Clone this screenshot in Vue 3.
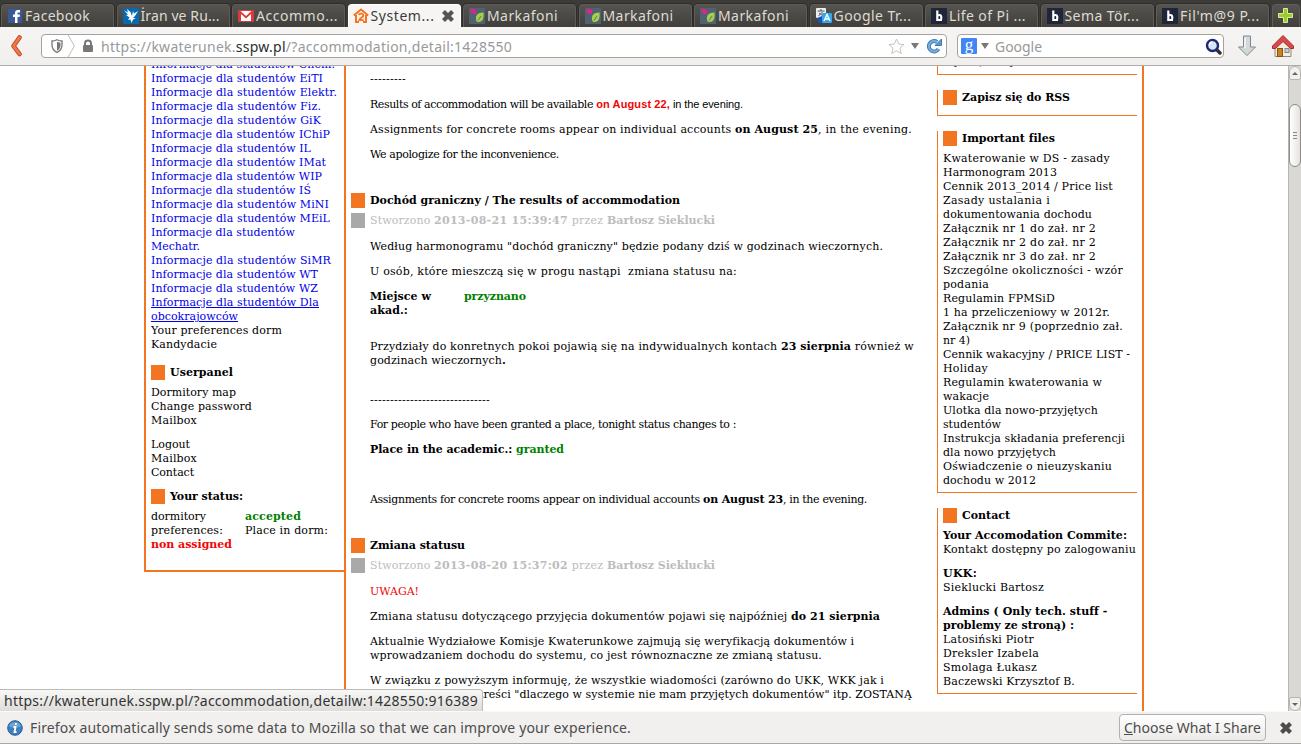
<script setup>
const vFit = {
  mounted(el, binding) {
    const natural = el.getBoundingClientRect().width
    const count = Array.from(el.textContent).length
    el.style.letterSpacing = (binding.value - natural) / count + 'px'
  }
}

const tabs = [
  { icon: 'facebook', label: 'Facebook', w: 65 },
  { icon: 'bird', label: 'İran ve Ru...', w: 79 },
  { icon: 'gmail', label: 'Accommo...', w: 82 },
  { icon: 'house', label: 'System...', w: 64, active: true },
  { icon: 'leaf', label: 'Markafoni', w: 71 },
  { icon: 'leaf', label: 'Markafoni', w: 71 },
  { icon: 'leaf', label: 'Markafoni', w: 71 },
  { icon: 'translate', label: 'Google Tr...', w: 78 },
  { icon: 'b', label: 'Life of Pi ...', w: 77 },
  { icon: 'b', label: 'Sema Tör...', w: 75 },
  { icon: 'b', label: "Fil'm@9 P...", w: 80 }
]

const links = [
  ['Chem.', 184], ['EiTI', 172], ['Elektr.', 186], ['Fiz.', 170], ['GiK', 170], ['IChiP', 179], ['IL', 160],
  ['IMat', 175], ['WIP', 171], ['IŚ', 160], ['MiNI', 178], ['MEiL', 179]
]
const linksEnd = [['SiMR', 180], ['WT', 167], ['WZ', 167]]

const files = [
  ['Kwaterowanie w DS - zasady', 167], ['Harmonogram 2013', 114], ['Cennik 2013_2014 / Price list', 170],
  ['Zasady ustalania i', 107], ['dokumentowania dochodu', 149], ['Załącznik nr 1 do zał. nr 2', 153],
  ['Załącznik nr 2 do zał. nr 2', 153], ['Załącznik nr 3 do zał. nr 2', 153],
  ['Szczególne okoliczności - wzór', 180], ['podania', 46], ['Regulamin FPMSiD', 112],
  ['1 ha przeliczeniowy w 2012r.', 167], ['Załącznik nr 9 (poprzednio zał.', 180], ['nr 4)', 27],
  ['Cennik wakacyjny / PRICE LIST -', 187], ['Holiday', 45], ['Regulamin kwaterowania w', 159],
  ['wakacje', 46], ['Ulotka dla nowo-przyjętych', 155], ['studentów', 58],
  ['Instrukcja składania preferencji', 182], ['dla nowo przyjętych', 113],
  ['Oświadczenie o nieuzyskaniu', 169], ['dochodu w 2012', 93]
]
</script>

<template>
  <div class="browser">
    <div class="tabs">
      <div v-for="(t, i) in tabs" :key="i" class="tab" :class="{ active: t.active }">
        <svg v-if="t.icon === 'facebook'" class="fav" viewBox="0 0 16 16"><rect x="1" y="1" width="14" height="14" fill="#3b5998" /><path d="M8 15V9H6V6.500h2V5c0-2 1-3 3-3h2v2.500h-1.500c-.7 0-1 .3-1 1v1H13L12.600 9h-2.100v6z" fill="#fff" /></svg>
        <svg v-else-if="t.icon === 'bird'" class="fav" viewBox="0 0 16 16"><rect width="16" height="16" fill="#0868b0" /><path d="M1 2.500l4 2-1-3.500 3.500 3L9 8l1-5 1 2.500L15 3l-3 5-2 2 3 .5-3 1L8.500 15l-1-3.500L5 12l1.500-2.500L3 7l2-.5z" fill="#fff" /></svg>
        <svg v-else-if="t.icon === 'gmail'" class="fav" viewBox="0 0 16 16"><rect y="2" width="16" height="12" rx="1" fill="#d93a3a" /><path d="M2.500 3h11L8 8z" fill="#fff" /><path d="M3 13V6l5 4.500L13 6v7z" fill="#fff" /></svg>
        <svg v-else-if="t.icon === 'house'" class="fav" viewBox="0 0 16 16"><path d="M.8 7.500L8 1.500l7.200 6M3 7v7h3M13 7v7h-3" fill="none" stroke="#f47521" stroke-width="2" /><path d="M5.800 7c.5-2 4.700-2 4.500.5C10 9.500 6.500 10 6.300 12.200h4.500" fill="none" stroke="#f47521" stroke-width="1.800" /></svg>
        <svg v-else-if="t.icon === 'leaf'" class="fav" viewBox="0 0 16 16"><rect width="16" height="16" fill="#4e6270" /><path d="M1.500 1c4-1 7 2 5.500 5C3 6.500 1 5 1.500 1z" fill="#d8268c" /><path d="M14.500 4.500c-6 0-9 3-7 9 5 2 8-2 7-9z" fill="#a5cd4e" /><path d="M9 12.500l3-4.500" stroke="#4e6270" stroke-width=".8" /></svg>
        <svg v-else-if="t.icon === 'translate'" class="fav" viewBox="0 0 16 16"><rect width="10" height="10" rx="1" fill="#eee" /><path d="M1.500 3h7M5 1v2M2.500 8l4-4M3 5l4 3" stroke="#555" fill="none" /><path d="M1 10l5-2v7H3z" fill="#1556b8" /><rect x="6" y="5" width="10" height="10" rx="1" fill="#31a8ee" /><path d="M8 13l3-6.500L14 13M9 11h4" fill="none" stroke="#fff" stroke-width="1.400" /></svg>
        <svg v-else class="fav" viewBox="0 0 16 16"><rect width="16" height="16" fill="#20263a" /><path d="M6.300 2.500V13M6 7.800c4-2 5 0 4 4.200H6" fill="none" stroke="#fff" stroke-width="2.200" /></svg>
        <span class="label"><span v-fit="t.w">{{ t.label }}</span></span>
        <svg v-if="t.active" class="close" viewBox="0 0 14 14"><path d="M2.500 2.500l9 9M11.500 2.500l-9 9" stroke="#555" stroke-width="4.200" /></svg>
      </div>
      <div class="newtab">
        <svg viewBox="0 0 18 18"><path d="M6.500 1.500h4v5h5v4h-5v5h-4v-5h-5v-4h5z" fill="#9ccc2b" stroke="#d7ee9a" /></svg>
      </div>
    </div>

    <div class="toolbar">
      <svg class="back" viewBox="0 0 14 22"><path d="M9.500 2.500L3.500 11l6 8" fill="none" stroke="#b8431c" stroke-width="4.500" stroke-linejoin="round" stroke-linecap="round" /><path d="M9.500 2.500L3.500 11l6 8" fill="none" stroke="#ee7a47" stroke-width="2.800" stroke-linecap="round" /></svg>
      <div class="url">
        <svg class="shield" viewBox="0 0 14 14"><path d="M2 2c2 0 3.500-.5 5-1.300C8.500 1.500 10 2 12 2v4c0 3.500-2 6-5 7.500C4 12 2 9.500 2 6z" fill="none" stroke="#777" stroke-width="1.300" /><path d="M7 2.800c1 .5 2 .8 3.500.9v2.500c0 2.300-1.300 4.300-3.500 5.500z" fill="#777" /></svg>
        <svg class="chev" viewBox="0 0 9 23"><path d="M1 0l6.500 11.500L1 23" fill="none" stroke="#bbb" /></svg>
        <svg class="lock" viewBox="0 0 12 14"><path d="M3 6V4.500a3 3 0 016 0V6" fill="none" stroke="#777" stroke-width="2" /><rect x="1" y="6" width="10" height="7" rx="1" fill="#777" /></svg>
        <span class="address"><span v-fit="411">https://kwaterunek.<b>sspw.pl</b>/?accommodation,detail:1428550</span></span>
        <svg class="star" viewBox="0 0 17 17"><path d="M8.500 1l2.200 5 5.300.6-4 3.500 1.200 5.400-4.700-2.800-4.700 2.800L5 10.100 1 6.600 6.300 6z" fill="#fff" stroke="#c4c4c4" /></svg>
        <i class="caret"></i>
        <svg class="reload" viewBox="0 0 16 16"><path d="M12.500 11A5.200 5.200 0 1111 4" fill="none" stroke="#3f78b3" stroke-width="4" /><path d="M12.500 11A5.200 5.200 0 1111 4" fill="none" stroke="#78add9" stroke-width="2.200" /><path d="M9 7.500h6.500V1z" fill="#5e97cc" stroke="#3f78b3" /></svg>
      </div>
      <div class="search">
        <svg class="google" viewBox="0 0 16 16"><rect width="16" height="16" rx="1" fill="#4285f4" /><text x="8" y="11.500" text-anchor="middle" font-family="Liberation Serif, serif" font-size="17" fill="#fff">g</text></svg>
        <i class="caret"></i>
        <span class="address grow"><span v-fit="47">Google</span></span>
        <svg class="glass" viewBox="0 0 17 17"><path d="M11 11l4 4" stroke="#333" stroke-width="3.500" stroke-linecap="round" /><circle cx="7.500" cy="7.500" r="5.500" fill="#d7e6f7" stroke="#1d2a72" stroke-width="2.400" /><path d="M4.500 7a3 3 0 013-3" fill="none" stroke="#fff" stroke-width="1.500" /></svg>
      </div>
      <svg class="down" viewBox="0 0 20 22"><path d="M6.500 1h7v11h5L10 20.500 1.500 12h5z" fill="#d3d8da" stroke="#80868a" stroke-linejoin="round" /><path d="M8 2.500v10.500" stroke="#f5f7f8" stroke-width="1.500" /></svg>
      <svg class="home" viewBox="0 0 24 24"><path d="M4 12l8-8 8 8v10.500H4z" fill="#f4eedf" stroke="#8f887a" /><path d="M12 1.500L1.500 12v2.500h3L12 7.500l7.500 7h3V12z" fill="#d84a4a" stroke="#a92a2a" stroke-linejoin="round" /><rect x="6.500" y="14.500" width="5" height="8" fill="#c98220" stroke="#8a5310" /><rect x="14" y="14.500" width="4" height="4" fill="#bcd1de" stroke="#888" /></svg>
    </div>

    <div class="viewport">
      <div class="page">
        <div class="left">
          <div v-for="l in links" :key="l[0]" class="blue"><span v-fit="l[1]">Informacje dla studentów {{ l[0] }}</span></div>
          <div class="blue"><span v-fit="144">Informacje dla studentów</span><br><span v-fit="49">Mechatr.</span></div>
          <div v-for="l in linksEnd" :key="l[0]" class="blue"><span v-fit="l[1]">Informacje dla studentów {{ l[0] }}</span></div>
          <div class="blue hovered"><span v-fit="168">Informacje dla studentów Dla</span><br><span v-fit="87">obcokrajowców</span></div>
          <div><span v-fit="131">Your preferences dorm</span></div>
          <div><span v-fit="66">Kandydacie</span></div>
          <h3 class="gap14"><i></i><span v-fit="63">Userpanel</span></h3>
          <div><span v-fit="85">Dormitory map</span></div>
          <div><span v-fit="101">Change password</span></div>
          <div><span v-fit="46">Mailbox</span></div>
          <div class="gap10"><span v-fit="39">Logout</span></div>
          <div><span v-fit="46">Mailbox</span></div>
          <div><span v-fit="43">Contact</span></div>
          <h3 class="gap10"><i></i><span v-fit="73">Your status:</span></h3>
          <div class="status">
            <div><span v-fit="55">dormitory</span><br><span v-fit="72">preferences:</span><br><b class="red"><span v-fit="81">non assigned</span></b></div>
            <div><b class="green"><span v-fit="56">accepted</span></b><br><span v-fit="83">Place in dorm:</span></div>
          </div>
        </div>

        <div class="main">
          <div class="text">
            <p class="first"><span v-fit="36">---------</span></p>
            <p class="g10"><span v-fit="223">Results of accommodation will be available</span><span class="sans"><b v-fit="77" class="red"> on August 22,</b><span v-fit="73"> in the evening.</span></span></p>
            <p><span v-fit="365">Assignments for concrete rooms appear on individual accounts </span><b v-fit="83">on August 25</b><span v-fit="94">, in the evening.</span></p>
            <p><span v-fit="189">We apologize for the inconvenience.</span></p>
          </div>
          <h3 class="g32"><i></i><span v-fit="310">Dochód graniczny / The results of accommodation</span></h3>
          <div class="meta"><i></i><span v-fit="64">Stworzono </span><b v-fit="134">2013-08-21 15:39:47</b><span v-fit="39"> przez </span><b v-fit="108">Bartosz Sieklucki</b></div>
          <div class="text">
            <p><span v-fit="513">Według harmonogramu "dochód graniczny" będzie podany dziś w godzinach wieczornych.</span></p>
            <p><span v-fit="367">U osób, które mieszczą się w progu nastąpi&nbsp; zmiana statusu na:</span></p>
            <p class="pair"><b><span v-fit="61">Miejsce w</span><br><span v-fit="38">akad.:</span></b><b class="green"><span v-fit="62">przyznano</span></b></p>
            <p class="g22"><span v-fit="411">Przydziały do konretnych pokoi pojawią się na indywidualnych kontach </span><b v-fit="70">23 sierpnia</b><span v-fit="63"> również w</span><br><span v-fit="132">godzinach wieczornych</span><b>.</b></p>
            <p class="g26"><span v-fit="120">------------------------------</span></p>
            <p class="g10"><span v-fit="366">For people who have been granted a place, tonight status changes to :</span></p>
            <p><b><span v-fit="146">Place in the academic.: </span><span v-fit="48" class="green">granted</span></b></p>
            <p class="g36"><span v-fit="333">Assignments for concrete rooms appear on individual accounts </span><b v-fit="80">on August 23</b><span v-fit="84">, in the evening.</span></p>
          </div>
          <h3 class="g32"><i></i><span v-fit="95">Zmiana statusu</span></h3>
          <div class="meta"><i></i><span v-fit="64">Stworzono </span><b v-fit="134">2013-08-20 15:37:02</b><span v-fit="39"> przez </span><b v-fit="108">Bartosz Sieklucki</b></div>
          <div class="text">
            <p class="red"><span v-fit="49">UWAGA!</span></p>
            <p><span v-fit="421">Zmiana statusu dotyczącego przyjęcia dokumentów pojawi się najpóźniej </span><b v-fit="89">do 21 sierpnia</b></p>
            <p><span v-fit="484">Aktualnie Wydziałowe Komisje Kwaterunkowe zajmują się weryfikacją dokumentów i</span><br><span v-fit="452">wprowadzaniem dochodu do systemu, co jest równoznaczne ze zmianą statusu.</span></p>
            <p><span v-fit="514">W związku z powyższym informuję, że wszystkie wiadomości (zarówno do UKK, WKK jak i</span><br><span v-fit="542">do administracji) o treści "dlaczego w systemie nie mam przyjętych dokumentów" itp. ZOSTANĄ</span></p>
          </div>
        </div>

        <div class="right">
          <section class="clip"><span v-fit="73">Wykaz, który</span></section>
          <section class="rss"><h3><i></i><span v-fit="108">Zapisz się do RSS</span></h3></section>
          <section>
            <h3><i></i><span v-fit="92">Important files</span></h3>
            <div v-for="(f, i) in files" :key="i"><span v-fit="f[1]">{{ f[0] }}</span></div>
          </section>
          <section>
            <h3><i></i><span v-fit="48">Contact</span></h3>
            <div><b v-fit="184">Your Accomodation Commite:</b></div>
            <div><span v-fit="193">Kontakt dostępny po zalogowaniu</span></div>
            <div class="gap10"><b v-fit="34">UKK:</b></div>
            <div><span v-fit="101">Sieklucki Bartosz</span></div>
            <div class="gap10"><b v-fit="164">Admins ( Only tech. stuff -</b></div>
            <div><b v-fit="131">problemy ze stroną) :</b></div>
            <div><span v-fit="91">Latosiński Piotr</span></div>
            <div><span v-fit="96">Dreksler Izabela</span></div>
            <div><span v-fit="94">Smolaga Łukasz</span></div>
            <div><span v-fit="132">Baczewski Krzysztof B.</span></div>
          </section>
        </div>
      </div>
      <div class="scroll">
        <div class="arrow up"><i></i></div>
        <div class="track"><div class="thumb"><i></i><i></i><i></i></div></div>
        <div class="arrow dn"><i></i></div>
      </div>
      <div class="hoverurl"><span v-fit="474">https://kwaterunek.sspw.pl/?accommodation,detailw:1428550:916389</span></div>
    </div>

    <div class="notice">
      <svg class="info" viewBox="0 0 16 16"><circle cx="8" cy="8" r="7.300" fill="#3f7fc0" stroke="#2a5f98" /><path d="M2 6a6.200 5 0 0112 0c-3 2-9 2-12 0z" fill="#8db9e0" opacity=".6" /><path d="M8.800 3v2M6.500 7h2L7.500 12h2" fill="none" stroke="#fff" stroke-width="1.800" /></svg>
      <span class="msg"><span v-fit="601">Firefox automatically sends some data to Mozilla so that we can improve your experience.</span></span>
      <div class="button"><span v-fit="137"><u>C</u>hoose What I Share</span></div>
      <svg class="close2" viewBox="0 0 14 14"><path d="M2.500 2.500l9 9M11.500 2.500l-9 9" stroke="#4c4c4c" stroke-width="4.200" /></svg>
    </div>
  </div>
</template>

<style>
body { margin: 0; }
</style>

<style scoped>
* { box-sizing: border-box; }
.browser { width: 1301px; height: 744px; display: flex; flex-direction: column; overflow: hidden; font-family: "Noto Sans", "Open Sans", sans-serif; font-size: 14px; color: #3c3c3c; background: #fff; }
svg { display: block; flex: none; }
.tabs { height: 27px; flex: none; display: flex; gap: 2.5px; padding: 4px 1px 0 1px; background: #3c3b37; }
.tab { width: 113px; height: 23px; flex: none; display: flex; align-items: center; border: 1px solid #5d5c57; border-bottom: 0; border-radius: 4px 4px 0 0; background: linear-gradient(#555450, #403f3b); padding-left: 5px; color: #dfdbd2; box-shadow: 0 0 0 1px #2d2c29; }
.tab.active { background: #f6f5f3; border-color: #fff; color: #3c3c3c; box-shadow: none; padding-left: 4px; }
.fav { width: 16px; height: 16px; }
.label { margin-left: 2px; line-height: 20px; white-space: nowrap; flex: 1; }
.close { width: 14px; height: 14px; margin-right: 5px; }
.newtab { flex: 1; border: 1px solid #5d5c57; border-bottom: 0; border-radius: 4px 4px 0 0; background: linear-gradient(#555450, #403f3b); display: flex; justify-content: center; align-items: center; }
.newtab svg { width: 18px; height: 18px; }
.toolbar { height: 39px; flex: none; display: flex; align-items: center; border-bottom: 1px solid #aeaca8; background: linear-gradient(#f6f5f3, #f0efed); padding-left: 10px; }
.back { width: 14px; height: 22px; }
.url { width: 906px; height: 24px; margin-left: 17px; display: flex; align-items: center; background: #fff; border: 1px solid #a5a39c; border-radius: 4px; }
.shield { width: 14px; height: 14px; margin-left: 8px; }
.chev { width: 9px; height: 22px; margin-left: 3px; }
.lock { width: 12px; height: 14px; margin-left: 6px; }
.address { flex: 1; margin-left: 7px; white-space: nowrap; color: #999; line-height: 22px; padding-top: 1px; }
.address b { font-weight: 400; color: #2c2c2c; }
.star { width: 17px; height: 17px; }
.caret { width: 0; height: 0; border: 4px solid transparent; border-top: 6px solid #777; border-bottom: 0; margin-left: 6px; }
.reload { width: 16px; height: 16px; margin: 0 4px 0 7px; }
.search { width: 267px; height: 24px; margin-left: 10px; display: flex; align-items: center; background: #fff; border: 1px solid #a5a39c; border-radius: 4px; padding-left: 3px; }
.google { width: 16px; height: 16px; }
.search .caret { margin-left: 4px; }
.search .address { margin-left: 6px; }
.glass { width: 17px; height: 17px; margin-right: 1px; }
.down { width: 20px; height: 22px; margin-left: 13px; }
.home { width: 24px; height: 24px; margin-left: 14px; }

.viewport { height: 645px; flex: none; position: relative; overflow: hidden; display: flex; justify-content: space-between; font: 11px/14px "DejaVu Serif", serif; color: #000; background: #fff; }
.page { display: flex; align-items: flex-start; margin-left: 144px; white-space: nowrap; }
.page div, .page p { flex-shrink: 0; }
.left { width: 200px; height: 506px; border-left: 2px solid #f47521; border-bottom: 2px solid #f47521; padding-left: 5px; margin-top: 0; display: flex; flex-direction: column; overflow: hidden; }
.left > div:first-child { margin-top: -8px; }
.blue { color: #0000e8; }
.hovered span { text-decoration: underline; }
h3 { margin: 0 0 5px; height: 15px; font-size: 11px; line-height: 14px; font-weight: bold; display: flex; }
h3 i, .meta i { width: 14px; height: 15px; background: #f47521; margin: -1px 5px 0 0; flex: none; }
h3.gap14 { margin-top: 14px; }
.gap10 { margin-top: 10px; }
.status { display: flex; }
.status > div:first-child { width: 94px; }
.red { color: #f00505; }
.green { color: #008000; }
.main { width: 591px; height: 660px; border-left: 2px solid #f47521; padding-left: 5px; }
.text { padding-left: 19px; }
p { margin: 11px 0 0; }
p.first { margin-top: 7px; }
.sans { font-family: "Liberation Sans", sans-serif; white-space: pre-wrap; }
.text span, .meta span, .text b { white-space: pre; }
h3.g32 { margin-top: 32px; }
.meta { display: flex; height: 15px; color: #bcbcbc; }
.meta i { background: #a9a9a9; }
.pair { display: flex; }
.pair b:first-child { width: 94px; }
p.g22 { margin-top: 22px; }
p.g26 { margin-top: 26px; }
p.g10 { margin-top: 10px; }
p.g36 { margin-top: 36px; }
.right { width: 209px; height: 660px; border-right: 2px solid #f47521; padding: 0 7px 0 2px; }
section { border-left: 1px solid #f47521; border-bottom: 1px solid #f47521; padding: 1px 0 4px 5px; margin-bottom: 15px; width: 200px; }
section.clip { height: 9px; display: flex; align-items: flex-end; padding-bottom: 5px; }
section.rss { height: 26px; }
.scroll { width: 13px; height: 645px; display: flex; flex-direction: column; background: #dad8d5; border-left: 1px solid #b8b5b0; }
.arrow { height: 14px; display: flex; align-items: center; justify-content: center; background: #f1f0ee; border: 1px solid #b8b5b0; border-radius: 6px 6px 2px 2px; }
.arrow.dn { border-radius: 2px 2px 6px 6px; }
.arrow i { width: 0; height: 0; border: 3px solid transparent; }
.up i { border-bottom: 3px solid #666; border-top: 0; }
.dn i { border-top: 3px solid #666; border-bottom: 0; }
.track { flex: 1; padding-top: 24px; }
.thumb { height: 63px; border: 1px solid #8f8c87; border-radius: 6px; background: linear-gradient(90deg, #fff, #e4e3e1); display: flex; flex-direction: column; align-items: center; justify-content: center; gap: 2px; }
.thumb i { width: 4px; height: 1px; background: #888; }
.hoverurl { position: absolute; left: 0; bottom: 0; width: 483px; height: 22px; border: 1px solid #bdbbb7; border-left: 0; border-bottom: 0; border-radius: 0 4px 0 0; background: linear-gradient(#f8f8f7, #dddcda); padding-left: 4px; font: 14px/22px "Noto Sans", sans-serif; color: #333; white-space: nowrap; }
.notice { flex: 1; display: flex; align-items: center; background: #f1f0ee; border-bottom: 1px solid #aaa8a4; border-top: 1px solid #fafafa; padding-left: 7px; white-space: nowrap; color: #4c4c4c; }
.info { width: 16px; height: 16px; }
.msg { flex: 1; margin-left: 7px; }
.button { width: 147px; height: 27px; border: 1px solid #b3b1ac; border-radius: 4px; background: linear-gradient(#fff, #eceae8); display: flex; align-items: center; justify-content: center; }
.close2 { width: 14px; height: 14px; margin: 0 8px 0 13px; }
</style>
